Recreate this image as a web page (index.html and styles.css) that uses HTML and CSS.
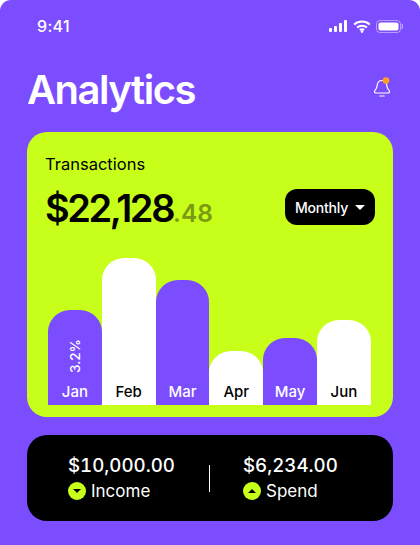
FILE: index.html
```html
<!DOCTYPE html>
<html lang="en">
<head>
	<meta charset="UTF-8">
	<title>Analytics</title>
	<link rel="stylesheet" href="styles.css">
</head>
<body>
	<div class="screen">
		<div class="status">
			<span class="time">9:41</span>
			<div class="status-icons">
				<svg width="19" height="12" viewBox="0 0 19 12"><rect x="0" y="8" width="3" height="4" rx="1"/><rect x="5" y="6" width="3" height="6" rx="1"/><rect x="10" y="3" width="3" height="9" rx="1"/><rect x="15" y="0" width="3" height="12" rx="1"/></svg>
				<svg width="18" height="13" viewBox="0 0 18 13"><path class="wifi" d="M1.2 4.6C5.500.6 12.500.6 16.800 4.600M4 7.500c2.800-2.500 7.200-2.500 10 0M6.800 10c1.300-1 3.100-1 4.400 0"/><circle cx="9" cy="11.600" r="1.300"/></svg>
				<svg width="27" height="13" viewBox="0 0 27 13"><rect class="batt-line" x=".5" y=".5" width="24" height="12" rx="3.500"/><rect x="2.500" y="2.500" width="20" height="8" rx="2"/><rect class="batt-line" x="26" y="4.500" width=".5" height="4"/></svg>
			</div>
		</div>

		<div class="header">
			<h1>Analytics</h1>
			<svg class="bell" width="20" height="24" viewBox="0 0 20 24"><path class="bell-line" d="M10 3.500c-3 0-4.600 2.200-4.800 5-.2 2.800-1.100 3.900-2.300 5.200-.9 1-.4 2.300 1 2.300h12.200c1.400 0 1.900-1.300 1-2.300-1.200-1.300-2.100-2.400-2.300-5.200-.2-2.800-1.800-5-4.800-5z"/><path class="bell-line" d="M7.800 19h4.400"/><circle class="bell-dot" cx="14" cy="3.500" r="3.300"/></svg>
		</div>

		<div class="card">
			<div class="card-title">Transactions</div>
			<div class="total-row">
				<div class="total">$22,128<span class="cents">.48</span></div>
				<div class="period">Monthly <span class="caret"></span></div>
			</div>
			<div class="chart">
				<div class="bar purple h-jan"><span class="pct">3.2%</span><span>Jan</span></div>
				<div class="bar white h-feb"><span>Feb</span></div>
				<div class="bar purple h-mar"><span>Mar</span></div>
				<div class="bar white h-apr"><span>Apr</span></div>
				<div class="bar purple h-may"><span>May</span></div>
				<div class="bar white h-jun"><span>Jun</span></div>
			</div>
		</div>

		<div class="summary">
			<div class="stat stat-income">
				<div class="amount">$10,000.00</div>
				<div class="label"><span class="dot"><span class="tri-down"></span></span>Income</div>
			</div>
			<div class="divider"></div>
			<div class="stat stat-spend">
				<div class="amount">$6,234.00</div>
				<div class="label"><span class="dot"><span class="tri-up"></span></span>Spend</div>
			</div>
		</div>
	</div>
</body>
</html>
```
FILE: styles.css
```css
html, body {
	margin: 0;
	height: 545px;
	overflow: hidden;
	background: #fff;
}
.screen {
	width: 420px;
	height: 545px;
	box-sizing: border-box;
	background: #7c4dff;
	border-radius: 11px 11px 0 0;
	padding: 0 27px;
	color: #fff;
	font-family: "Inter", "Liberation Sans", sans-serif;
}
.status {
	display: flex;
	justify-content: space-between;
	align-items: center;
	height: 52px;
	padding-left: 10px;
}
.time {
	font-size: 16px;
	font-weight: 500;
	letter-spacing: .3px;
}
.status-icons {
	display: flex;
	align-items: center;
	gap: 5px;
	margin-right: -10px;
}
.status-icons svg {
	fill: #fff;
}
.wifi {
	fill: none;
	stroke: #fff;
	stroke-width: 2;
}
.status-icons .batt-line {
	fill: none;
	stroke: #fff;
	stroke-opacity: .45;
}
.header {
	display: flex;
	justify-content: space-between;
	align-items: center;
	height: 80px;
}
h1 {
	margin: 0 0 6px;
	font-size: 40px;
	font-weight: 600;
	letter-spacing: -1.500px;
}
.bell {
	margin: 0 1px 6px 0;
}
.bell-line {
	fill: none;
	stroke: #fff;
	stroke-width: 1.200;
	stroke-linecap: round;
}
.bell-dot {
	fill: #ff9f1c;
}
.card {
	height: 285px;
	box-sizing: border-box;
	background: #c8ff1a;
	border-radius: 20px;
	padding: 22px 18px 12px;
	color: #000;
	display: flex;
	flex-direction: column;
}
.card-title {
	font-size: 16.500px;
	line-height: 20px;
}
.total-row {
	display: flex;
	justify-content: space-between;
	align-items: flex-start;
	margin-top: 14px;
}
.total {
	font-size: 38px;
	font-weight: 600;
	letter-spacing: -2.400px;
	line-height: 40px;
}
.cents {
	font-size: 24.500px;
	font-weight: 600;
	letter-spacing: 0;
	line-height: 1;
	color: #7a9a12;
}
.period {
	width: 90px;
	height: 36px;
	margin-top: 1px;
	background: #000;
	color: #fff;
	border-radius: 12px;
	display: flex;
	align-items: center;
	justify-content: center;
	gap: 7px;
	font-size: 14px;
	font-weight: 500;
	letter-spacing: -.2px;
}
.caret {
	width: 0;
	height: 0;
	border-left: 5px solid transparent;
	border-right: 5px solid transparent;
	border-top: 5px solid #fff;
}
.chart {
	margin-top: auto;
	margin-left: 3px;
	display: flex;
	align-items: flex-end;
}
.bar {
	width: 53.800px;
	flex: none;
	border-radius: 22px 22px 0 0;
	display: flex;
	flex-direction: column;
	align-items: center;
	justify-content: flex-end;
	font-size: 15px;
	font-weight: 500;
	line-height: 26px;
}
.purple {
	background: #7c4dff;
	color: #fff;
}
.white {
	background: #fff;
	color: #000;
}
.pct {
	writing-mode: vertical-rl;
	transform: rotate(180deg);
	font-size: 13.500px;
	font-weight: 500;
	line-height: 16px;
	margin-bottom: 6px;
}
.h-jan { height: 95px; }
.h-feb { height: 147px; }
.h-mar { height: 125px; }
.h-apr { height: 54px; }
.h-may { height: 67px; }
.h-jun { height: 85px; }
.summary {
	margin-top: 18px;
	height: 86px;
	background: #000;
	border-radius: 20px;
	display: flex;
	align-items: center;
}
.stat-income {
	margin-left: 41px;
	width: 141px;
}
.stat-spend {
	margin-left: 33px;
}
.amount {
	font-size: 18.700px;
	font-weight: 500;
	font-variant-numeric: tabular-nums;
	line-height: 26px;
}
.label {
	display: flex;
	align-items: center;
	gap: 5px;
	font-size: 17px;
	line-height: 24px;
}
.dot {
	width: 18px;
	height: 18px;
	border-radius: 50%;
	background: #c8ff1a;
	display: flex;
	align-items: center;
	justify-content: center;
}
.tri-down {
	border-left: 4px solid transparent;
	border-right: 4px solid transparent;
	border-top: 4px solid #000;
}
.tri-up {
	border-left: 4px solid transparent;
	border-right: 4px solid transparent;
	border-bottom: 4px solid #000;
}
.divider {
	width: 1px;
	height: 27px;
	background: #fff;
}
```
